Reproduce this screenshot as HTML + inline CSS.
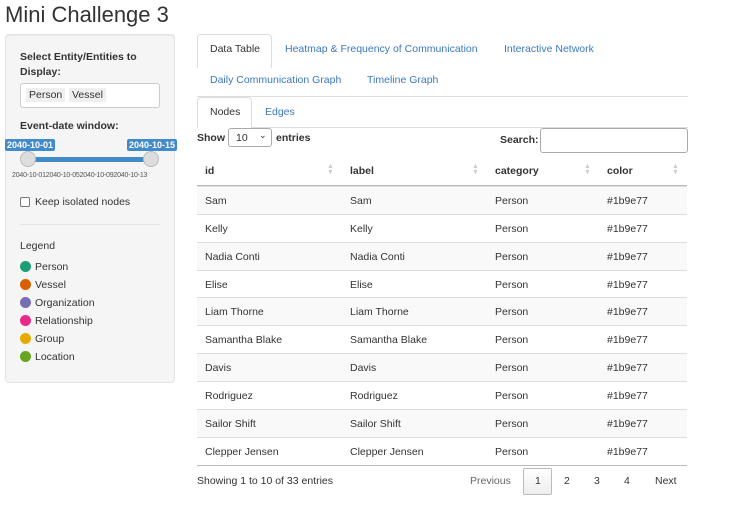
<!DOCTYPE html>
<html><head><style>
*{box-sizing:border-box;margin:0;padding:0}
body{width:752px;height:523px;background:#fff;font-family:"Liberation Sans",sans-serif;font-size:10.5px;color:#333;position:relative;overflow:hidden}
.a{position:absolute;white-space:nowrap}
.lnk{color:#3c78c0}
.panel{position:absolute;left:5px;top:34px;width:170px;height:349px;background:#f5f5f5;border:1px solid #e3e3e3;border-radius:4px;box-shadow:inset 0 1px 1px rgba(0,0,0,.05)}
.b{font-weight:bold}
.dot{display:inline-block;width:11px;height:11px;border-radius:50%;vertical-align:-2px;margin-right:4px}
.row{position:absolute;left:197px;width:490px;height:28px;border-top:1px solid #ddd}
.row span{position:absolute;top:8px}
.odd{background:#f9f9f9}
</style></head><body>
<div class="a" style="left:5px;top:2px;font-size:22px;color:#333">Mini Challenge 3</div>
<div class="panel"></div>
<div class="a b" style="left:20px;top:50px;line-height:15px">Select Entity/Entities to<br>Display:</div>
<div class="a" style="left:20px;top:83px;width:140px;height:25px;background:#fff;border:1px solid #ccc;border-radius:3px"></div>
<div class="a" style="left:26px;top:88px;background:#efefef;padding:1px 3px">Person</div>
<div class="a" style="left:69px;top:88px;background:#efefef;padding:1px 3px">Vessel</div>
<div class="a b" style="left:20px;top:120px">Event-date window:</div>
<div class="a" style="left:5px;top:139px;background:#428bca;color:#fff;font-size:9px;font-weight:bold;padding:1px 2px;border-radius:2px">2040-10-01</div>
<div class="a" style="left:127px;top:139px;background:#428bca;color:#fff;font-size:9px;font-weight:bold;padding:1px 2px;border-radius:2px">2040-10-15</div>
<div class="a" style="left:28px;top:157px;width:124px;height:5px;background:#428bca"></div>
<div class="a" style="left:20px;top:151px;width:16px;height:16px;border-radius:50%;background:#ddd;border:1px solid #bbb"></div>
<div class="a" style="left:143px;top:151px;width:16px;height:16px;border-radius:50%;background:#ddd;border:1px solid #bbb"></div>
<div class="a" style="left:12px;top:172px;font-size:7px;color:#555;letter-spacing:-.2px">2040-10-012040-10-052040-10-092040-10-13</div>
<div class="a" style="left:20px;top:197px;width:10px;height:10px;border:1px solid #777;border-radius:2px;background:#fff"></div>
<div class="a" style="left:35px;top:196px">Keep isolated nodes</div>
<div class="a" style="left:20px;top:224px;width:140px;height:1px;background:#e5e5e5"></div>
<div class="a" style="left:20px;top:240px">Legend</div>
<div class="a" style="left:20px;top:258px;line-height:18px"><span class="dot" style="background:#1b9e77"></span>Person<br><span class="dot" style="background:#d95f02"></span>Vessel<br><span class="dot" style="background:#7570b3"></span>Organization<br><span class="dot" style="background:#e7298a"></span>Relationship<br><span class="dot" style="background:#e6ab02"></span>Group<br><span class="dot" style="background:#66a61e"></span>Location</div>

<div class="a" style="left:197px;top:34px;width:75px;height:34px;border:1px solid #ddd;border-bottom:none;border-radius:4px 4px 0 0;background:#fff"></div>
<div class="a" style="left:210px;top:43px">Data Table</div>
<div class="a lnk" style="left:285px;top:43px">Heatmap &amp; Frequency of Communication</div>
<div class="a lnk" style="left:504px;top:43px">Interactive Network</div>
<div class="a lnk" style="left:210px;top:74px">Daily Communication Graph</div>
<div class="a lnk" style="left:367px;top:74px">Timeline Graph</div>
<div class="a" style="left:197px;top:96px;width:491px;height:1px;background:#ddd"></div>
<div class="a" style="left:197px;top:97px;width:55px;height:31px;border:1px solid #ddd;border-bottom:none;border-radius:4px 4px 0 0;background:#fff"></div>
<div class="a" style="left:210px;top:106px">Nodes</div>
<div class="a lnk" style="left:265px;top:106px">Edges</div>
<div class="a" style="left:251px;top:127px;width:437px;height:1px;background:#ddd"></div>
<div class="a b" style="left:197px;top:132px">Show</div>
<div class="a" style="left:228px;top:128px;width:44px;height:19px;border:1px solid #aaa;border-radius:3px;padding:3px 0 0 7px">10 <span style="position:absolute;left:30px;top:1px;font-size:9px">&#8964;</span></div>
<div class="a b" style="left:276px;top:132px">entries</div>
<div class="a b" style="left:500px;top:134px">Search:</div>
<div class="a" style="left:540px;top:128px;width:148px;height:25px;border:1px solid #aaa;border-radius:3px"></div>
<div class="a b" style="left:205px;top:165px">id</div>
<div class="a b" style="left:350px;top:165px">label</div>
<div class="a b" style="left:495px;top:165px">category</div>
<div class="a b" style="left:607px;top:165px">color</div>
<div class="a" style="left:327px;top:164px;font-size:7px;color:#ccc;line-height:6px">▲<br>▼</div>
<div class="a" style="left:472px;top:164px;font-size:7px;color:#ccc;line-height:6px">▲<br>▼</div>
<div class="a" style="left:584px;top:164px;font-size:7px;color:#ccc;line-height:6px">▲<br>▼</div>
<div class="a" style="left:672px;top:164px;font-size:7px;color:#ccc;line-height:6px">▲<br>▼</div>
<div class="a" style="left:197px;top:185px;width:490px;height:1px;background:#bbb"></div>
<div class="row odd" style="top:186px"><span style="left:8px">Sam</span><span style="left:153px">Sam</span><span style="left:298px">Person</span><span style="left:410px">#1b9e77</span></div>
<div class="row" style="top:214px"><span style="left:8px">Kelly</span><span style="left:153px">Kelly</span><span style="left:298px">Person</span><span style="left:410px">#1b9e77</span></div>
<div class="row odd" style="top:242px"><span style="left:8px">Nadia Conti</span><span style="left:153px">Nadia Conti</span><span style="left:298px">Person</span><span style="left:410px">#1b9e77</span></div>
<div class="row" style="top:270px"><span style="left:8px">Elise</span><span style="left:153px">Elise</span><span style="left:298px">Person</span><span style="left:410px">#1b9e77</span></div>
<div class="row odd" style="top:297px"><span style="left:8px">Liam Thorne</span><span style="left:153px">Liam Thorne</span><span style="left:298px">Person</span><span style="left:410px">#1b9e77</span></div>
<div class="row" style="top:325px"><span style="left:8px">Samantha Blake</span><span style="left:153px">Samantha Blake</span><span style="left:298px">Person</span><span style="left:410px">#1b9e77</span></div>
<div class="row odd" style="top:353px"><span style="left:8px">Davis</span><span style="left:153px">Davis</span><span style="left:298px">Person</span><span style="left:410px">#1b9e77</span></div>
<div class="row" style="top:381px"><span style="left:8px">Rodriguez</span><span style="left:153px">Rodriguez</span><span style="left:298px">Person</span><span style="left:410px">#1b9e77</span></div>
<div class="row odd" style="top:409px"><span style="left:8px">Sailor Shift</span><span style="left:153px">Sailor Shift</span><span style="left:298px">Person</span><span style="left:410px">#1b9e77</span></div>
<div class="row" style="top:437px"><span style="left:8px">Clepper Jensen</span><span style="left:153px">Clepper Jensen</span><span style="left:298px">Person</span><span style="left:410px">#1b9e77</span></div>
<div class="a" style="left:197px;top:465px;width:490px;height:1px;background:#bbb"></div>
<div class="a" style="left:197px;top:475px">Showing 1 to 10 of 33 entries</div>
<div class="a" style="left:470px;top:475px;color:#666">Previous</div>
<div class="a" style="left:523px;top:468px;width:29px;height:27px;border:1px solid #bbb;border-radius:2px;background:linear-gradient(#fff,#eee)"></div>
<div class="a" style="left:535px;top:475px">1</div>
<div class="a" style="left:564px;top:475px">2</div>
<div class="a" style="left:594px;top:475px">3</div>
<div class="a" style="left:624px;top:475px">4</div>
<div class="a" style="left:655px;top:475px">Next</div>
</body></html>
